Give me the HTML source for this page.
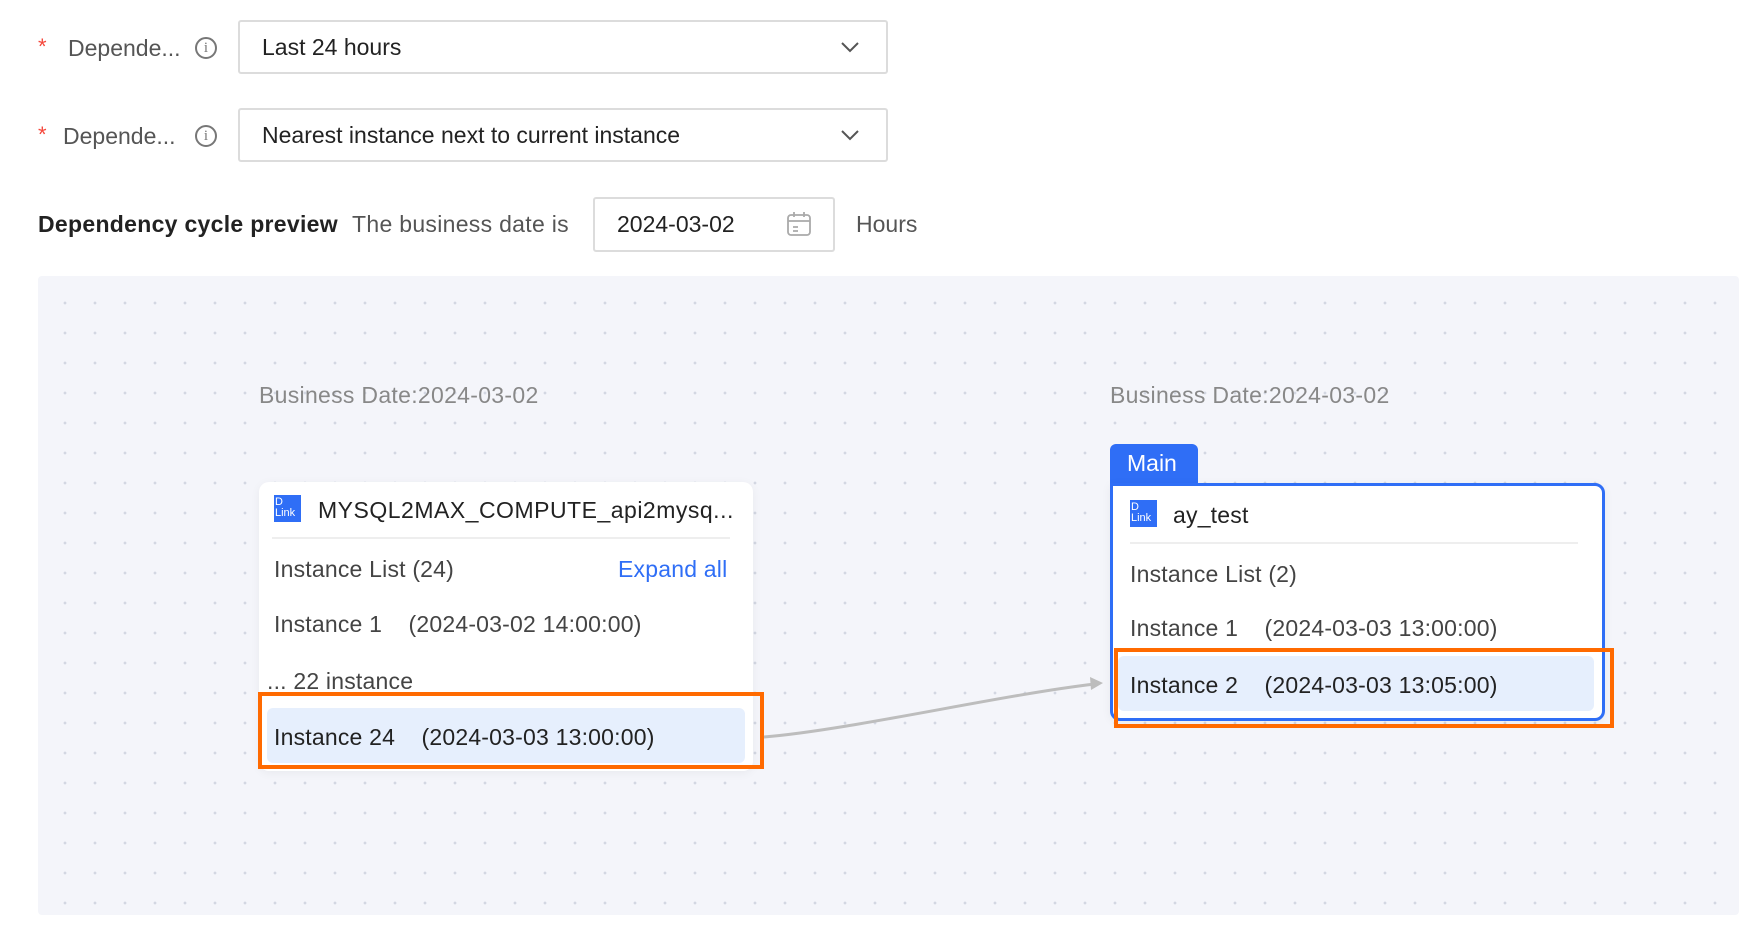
<!DOCTYPE html>
<html><head><meta charset="utf-8"><style>
*{box-sizing:border-box;margin:0;padding:0}
body{width:1764px;height:934px;background:#fff;font-family:"Liberation Sans",sans-serif;color:#333;position:relative;overflow:hidden}
.a{position:absolute;white-space:nowrap}
.lab{font-size:23px;color:#555;line-height:26px}
.star{color:#f5473b;font-size:22px}
.sel{position:absolute;left:238px;width:650px;height:54px;border:2px solid #dcdcdc;border-radius:3px;font-size:23px;color:#222;padding-left:22px;line-height:50px}
.info{position:absolute;width:22px;height:22px;border:2px solid #777;border-radius:50%;font-size:15px;line-height:18px;text-align:center;color:#777;font-family:"Liberation Serif",serif}
.canvas{position:absolute;left:38px;top:276px;width:1701px;height:639px;background-color:#f4f5fa;background-image:radial-gradient(circle,#d3d7e2 1.2px,transparent 1.6px);background-size:30px 30px;background-position:12px 12px;border-radius:4px}
.card{position:absolute;background:#fff;border-radius:10px;box-shadow:0 2px 10px rgba(0,0,0,.05)}
.t{font-size:23px;color:#444;letter-spacing:0.2px}
.ic{position:absolute;width:27px;height:27px;background:#2f6ef6;color:#fff;font-size:11px;line-height:11px;padding:2px 1px;font-family:"Liberation Sans",sans-serif}
.hl{position:absolute;background:#e6effd;border-radius:6px}
.ob{position:absolute;border:4px solid #ff6a00}
</style></head><body>
<span class="a star" style="left:38px;top:34px">*</span>
<span class="a lab" style="left:68px;top:35px">Depende...</span>
<div class="info" style="left:195px;top:37px">i</div>
<div class="sel" style="top:20px">Last 24 hours</div>
<svg class="a" style="left:840px;top:40px" width="20" height="14"><path d="M2 3 L10 11 L18 3" stroke="#555" stroke-width="2" fill="none"/></svg>

<span class="a star" style="left:38px;top:122px">*</span>
<span class="a lab" style="left:63px;top:123px">Depende...</span>
<div class="info" style="left:195px;top:125px">i</div>
<div class="sel" style="top:108px">Nearest instance next to current instance</div>
<svg class="a" style="left:840px;top:128px" width="20" height="14"><path d="M2 3 L10 11 L18 3" stroke="#555" stroke-width="2" fill="none"/></svg>

<span class="a" style="left:38px;top:211px;font-size:23px;font-weight:bold;color:#222;letter-spacing:0.3px">Dependency cycle preview</span>
<span class="a lab" style="left:352px;top:211px;letter-spacing:0.3px">The business date is</span>
<div class="a" style="left:593px;top:197px;width:242px;height:55px;border:2px solid #dcdcdc;border-radius:3px;font-size:23px;color:#222;padding-left:22px;line-height:51px">2024-03-02</div>
<svg class="a" style="left:786px;top:211px" width="26" height="26"><rect x="2" y="4" width="22" height="20" rx="3" fill="none" stroke="#aaa" stroke-width="1.8"/><path d="M2 10H24M8 1V6M18 1V6M7 16H12M7 20H12" stroke="#aaa" stroke-width="1.8"/></svg>
<span class="a lab" style="left:856px;top:211px">Hours</span>

<div class="canvas"></div>
<span class="a" style="left:259px;top:382px;font-size:23px;color:#888;letter-spacing:0.3px">Business Date:2024-03-02</span>
<span class="a" style="left:1110px;top:382px;font-size:23px;color:#888;letter-spacing:0.3px">Business Date:2024-03-02</span>

<div class="card" style="left:259px;top:482px;width:494px;height:289px"></div>
<div class="ic" style="left:274px;top:495px">D<br>Link</div>
<span class="a t" style="left:318px;top:497px;color:#222;letter-spacing:0.5px">MYSQL2MAX_COMPUTE_api2mysq...</span>
<div class="a" style="left:272px;top:537px;width:458px;height:2px;background:#eee"></div>
<span class="a t" style="left:274px;top:556px">Instance List (24)</span>
<span class="a t" style="left:618px;top:556px;color:#2f6ef6">Expand all</span>
<span class="a t" style="left:274px;top:611px">Instance 1&nbsp;&nbsp;&nbsp;&nbsp;(2024-03-02 14:00:00)</span>
<span class="a t" style="left:267px;top:668px">... 22 instance</span>
<div class="hl" style="left:267px;top:708px;width:478px;height:55px"></div>
<span class="a t" style="left:274px;top:724px;color:#222">Instance 24&nbsp;&nbsp;&nbsp;&nbsp;(2024-03-03 13:00:00)</span>
<div class="ob" style="left:258px;top:692px;width:506px;height:77px"></div>

<svg class="a" style="left:0;top:0" width="1764" height="934"><path d="M764 737 C 850 730, 1000 695, 1095 684" stroke="#bdbdbd" stroke-width="3" fill="none"/><path d="M1103 683 L1090 677 L1091 690 Z" fill="#bdbdbd"/></svg>

<div class="a" style="left:1110px;top:444px;width:88px;height:44px;background:#2f6ef6;border-radius:6px 6px 0 0;color:#fff;font-size:23px;padding:6px 0 0 17px">Main</div>
<div class="card" style="left:1110px;top:483px;width:495px;height:238px;border:3px solid #2f6ef6;border-top-left-radius:0"></div>
<div class="ic" style="left:1130px;top:500px">D<br>Link</div>
<span class="a t" style="left:1173px;top:502px;color:#222">ay_test</span>
<div class="a" style="left:1130px;top:542px;width:448px;height:2px;background:#eee"></div>
<span class="a t" style="left:1130px;top:561px">Instance List (2)</span>
<span class="a t" style="left:1130px;top:615px">Instance 1&nbsp;&nbsp;&nbsp;&nbsp;(2024-03-03 13:00:00)</span>
<div class="hl" style="left:1118px;top:656px;width:476px;height:55px"></div>
<span class="a t" style="left:1130px;top:672px;color:#222">Instance 2&nbsp;&nbsp;&nbsp;&nbsp;(2024-03-03 13:05:00)</span>
<div class="ob" style="left:1114px;top:648px;width:500px;height:80px"></div>
</body></html>
